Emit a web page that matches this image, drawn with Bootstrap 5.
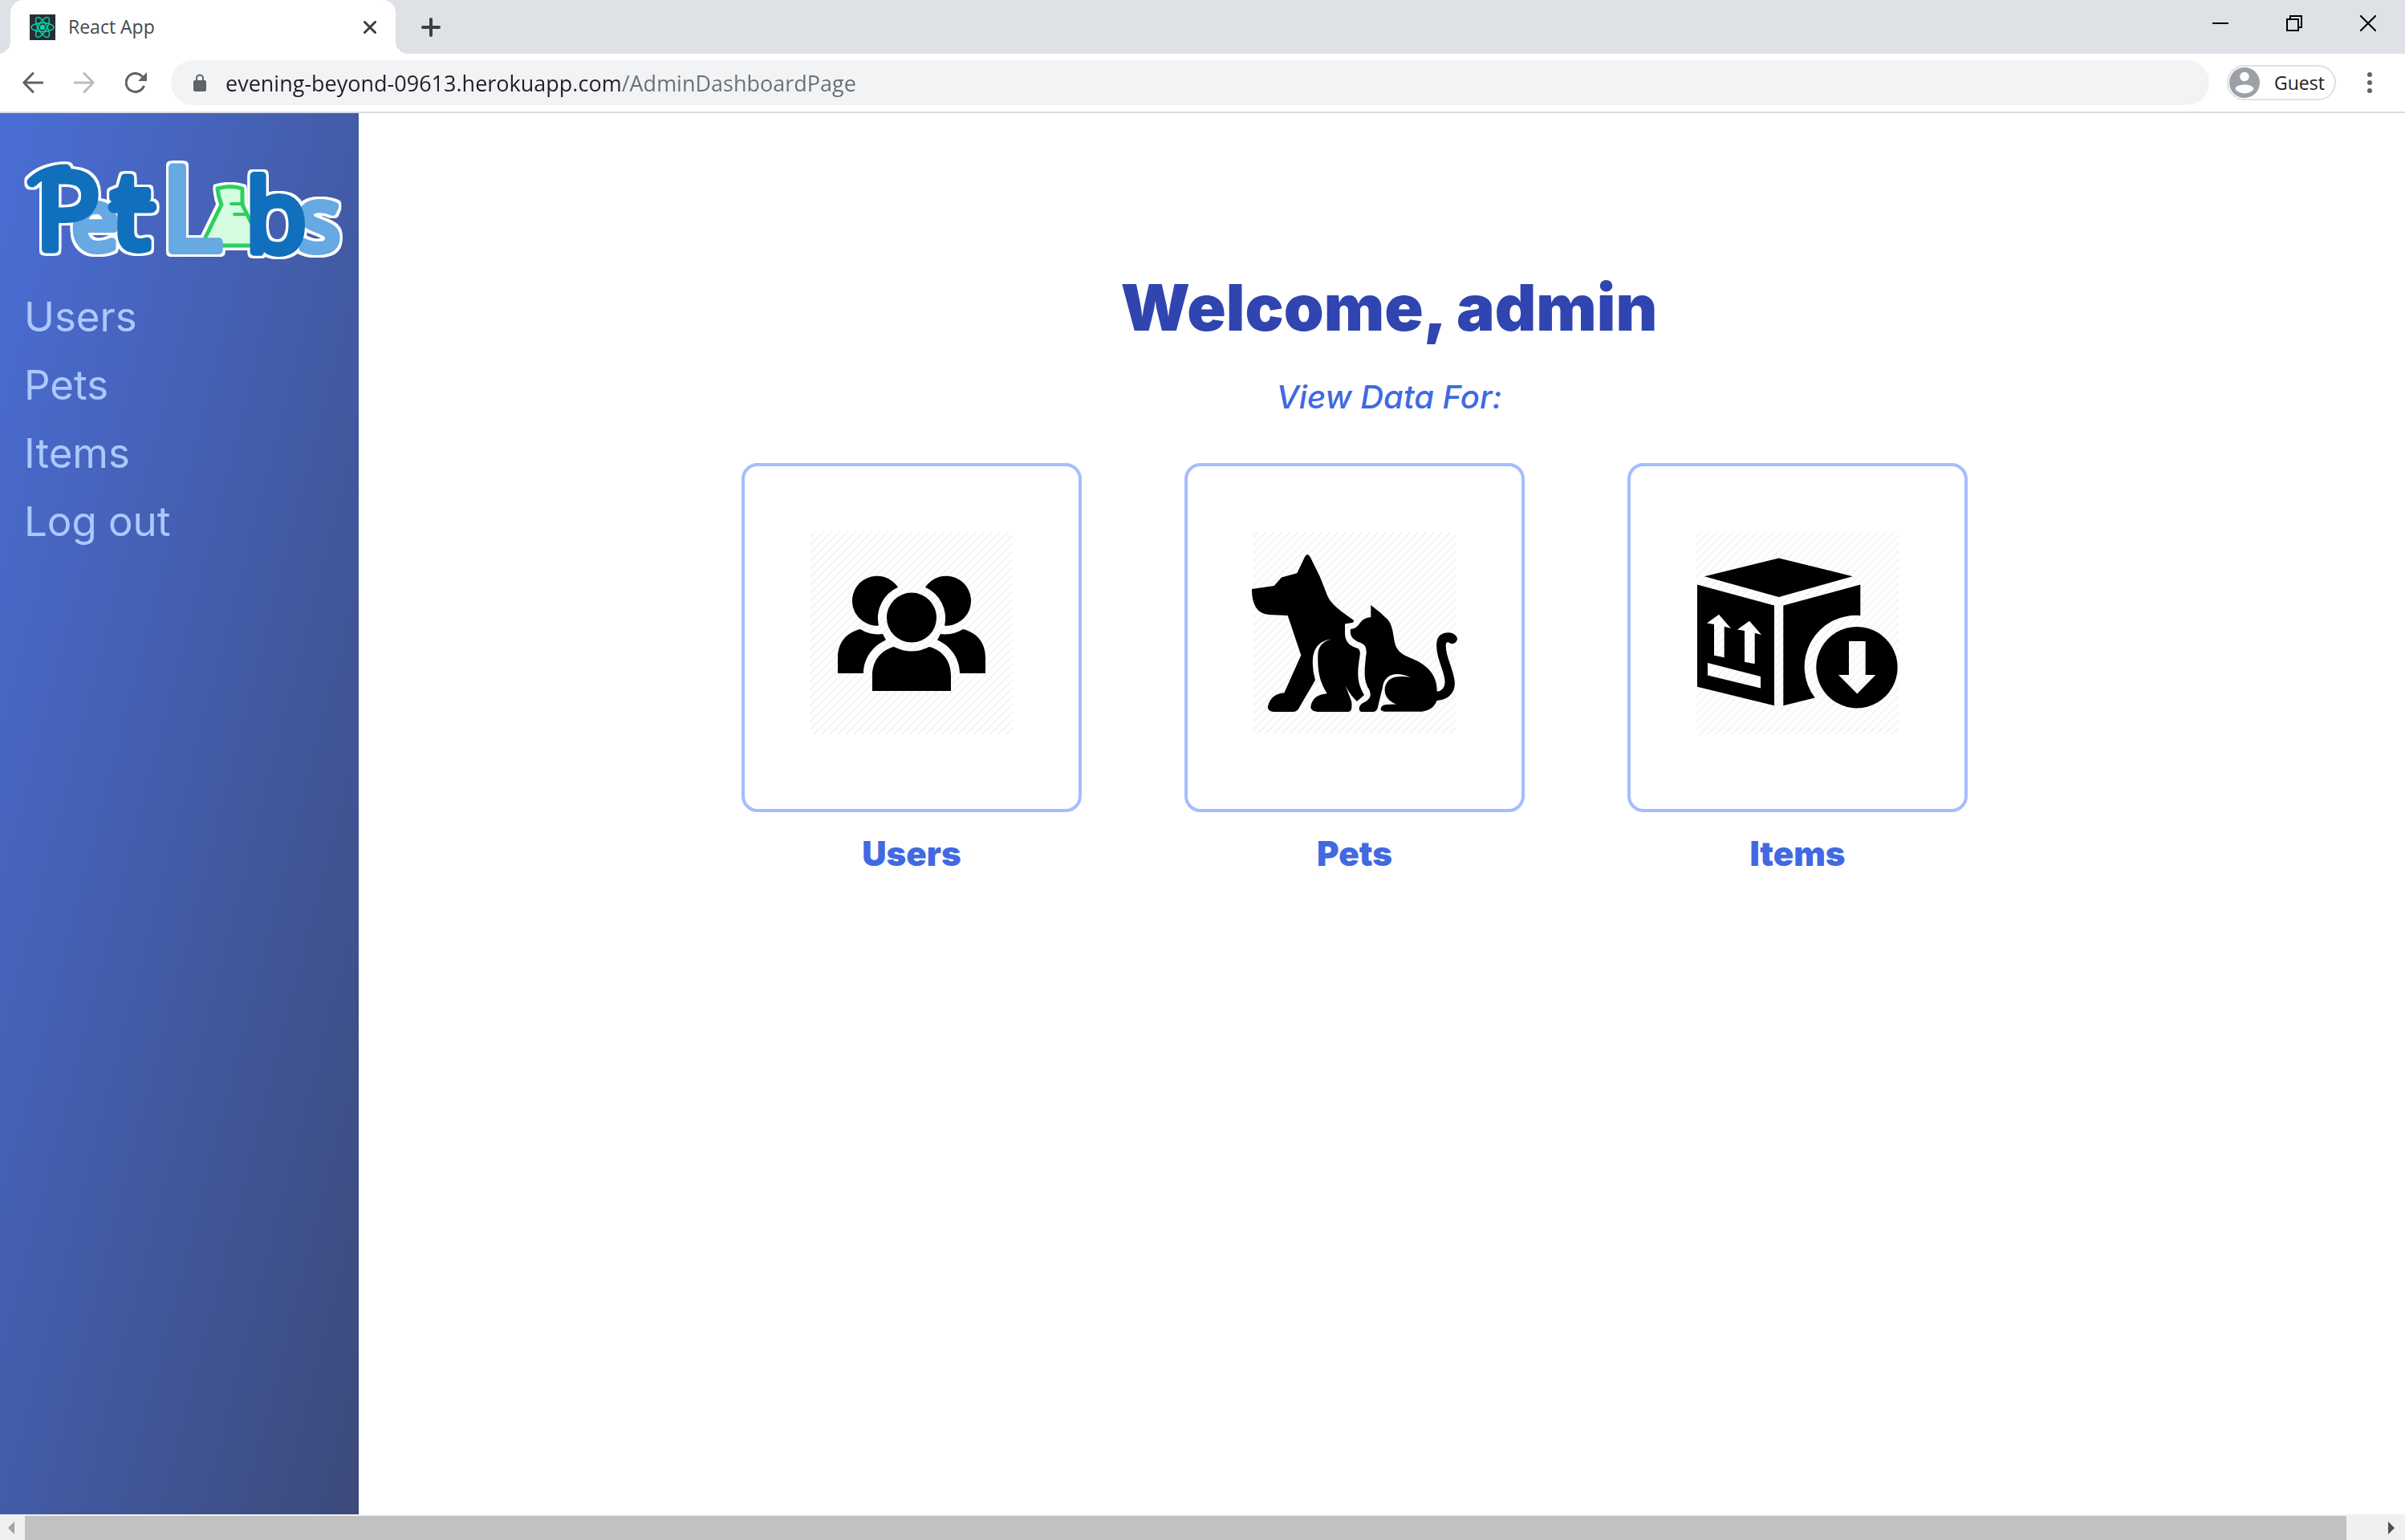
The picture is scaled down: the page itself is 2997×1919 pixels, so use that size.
<!DOCTYPE html>
<html lang="en">
<head>
<meta charset="utf-8">
<meta name="viewport" content="width=device-width, initial-scale=1">
<title>React App</title>
<link href="https://cdn.jsdelivr.net/npm/bootstrap@5.3.0/dist/css/bootstrap.min.css" rel="stylesheet">
<style>
  body { font-family: "Open Sans", "Noto Sans", sans-serif; background: #fff; }
  svg { display: block; flex: none; }
  a { text-decoration: none; }
  .plain { border: 0; background: none; padding: 0; color: inherit; }

  /* browser chrome */
  .tab-strip { background: #dee1e6; height: 67px; padding-left: 13px; padding-right: 36px; }
  .tab-item { width: 480px; height: 67px; background: #fff; border-radius: 16px 16px 0 0; padding: 0 24px; position: relative; }
  .tab-item::before, .tab-item::after { content: ""; position: absolute; bottom: 0; width: 16px; height: 16px; }
  .tab-item::before { left: -16px; background: radial-gradient(circle at 0 0, transparent 16px, #fff 16px); }
  .tab-item::after { right: -16px; background: radial-gradient(circle at 100% 0, transparent 16px, #fff 16px); }
  .tab-title, .guest-name { font-size: 23px; line-height: 32px; color: #45494d; }
  .tab-title { margin-left: 16px; padding-bottom: 2px; }
  .new-tab { margin-left: 32px; }
  .win-buttons { gap: 72px; height: 57px; color: #000; }
  .tool-bar { height: 74px; padding: 0 38px 1px 28px; border-bottom: 2px solid #dadce0; color: #5f6368; }
  .nav-icons { gap: 38px; margin-right: 30px; }
  .address { height: 56px; border-radius: 28px; background: #f1f3f4; padding: 0 28px; gap: 24px; }
  .address input { border: 0; outline: 0; padding: 2px 0 0; height: 42px; font-size: 27px; color: transparent;
    background: linear-gradient(90deg, #202124 493px, #6b6f73 493px); -webkit-background-clip: text; background-clip: text; }
  .guest { width: 136px; height: 44px; border: 2px solid #e0e1e3; border-radius: 22px; padding: 0 1px; gap: 18px; margin-left: 22px; margin-right: 36px; }
  .guest-name { color: #202124; }

  /* dashboard */
  .side-menu { width: 447px; padding: 58px 22px 0 30px; background: linear-gradient(to bottom right, #4a6ed6, #3c4a7a); }
  .side-menu a { font-family: Inter, sans-serif; font-weight: 400; font-size: 51px; line-height: 61px; color: #adc8ff; }
  .side-links { gap: 24px; margin-top: 39px; }
  .logo-art { filter: drop-shadow(3px 0 0 #fff) drop-shadow(-3px 0 0 #fff) drop-shadow(0 3px 0 #fff) drop-shadow(0 -3px 0 #fff); }
  .logo-art text { font-family: "Open Sans", sans-serif; font-weight: 400; stroke-width: 10; stroke-linejoin: round; }
  .ink-dark { fill: #1070bd; stroke: #1070bd; }
  .ink-light { fill: #66a9e3; stroke: #66a9e3; }
  .dash { padding: 192px 0 0 18px; }
  .welcome { font-family: Inter, sans-serif; font-weight: 900; font-size: 80px; line-height: 100px; color: #3045b0; margin: 0; }
  .prompt { font-family: Inter, sans-serif; font-style: italic; font-weight: 500; font-size: 40px; line-height: 48px; color: #4169e1; margin: 38px 0 58px; }
  .tiles { gap: 128px; padding-right: 86px; }
  .tile { width: 424px; }
  .tile-box { height: 435px; border: 4px solid #a5bdff; border-radius: 20px; padding-top: 80px; }
  .tile-label { font-family: Inter, sans-serif; font-weight: 900; font-size: 42px; line-height: 52px; color: #4169e1; margin-top: 26px; }

  /* horizontal scroll bar */
  .scroll-track { height: 32px; background: #f0f0f0; padding: 2px 13px 0 10px; }
  .scroll-thumb { height: 30px; background: #c1c1c1; margin: 0 52px 0 13px; }
</style>
<script src="https://cdn.jsdelivr.net/npm/bootstrap@5.3.0/dist/js/bootstrap.bundle.min.js"></script>
</head>
<body class="vh-100 d-flex flex-column overflow-hidden">

<header>
  <div class="tab-strip d-flex align-items-center">
    <div class="tab-item d-flex align-items-center">
      <svg width="32" height="32" viewBox="0 0 32 32"><rect width="32" height="32" fill="#282c34"/><g fill="none" stroke="#00d8a7" stroke-width="1.5"><ellipse cx="16" cy="16" rx="14" ry="5.4"/><ellipse cx="16" cy="16" rx="14" ry="5.4" transform="rotate(60 16 16)"/><ellipse cx="16" cy="16" rx="14" ry="5.4" transform="rotate(120 16 16)"/></g><circle cx="16" cy="16" r="3.2" fill="#00d8a7"/></svg>
      <span class="tab-title">React App</span>
      <button class="plain ms-auto" aria-label="Close tab"><svg width="16" height="16" viewBox="0 0 16 16"><path d="M1.500 1.500 14.500 14.500M14.500 1.500 1.500 14.500" stroke="#3c4043" stroke-width="3" stroke-linecap="round"/></svg></button>
    </div>
    <button class="plain new-tab" aria-label="New tab"><svg width="24" height="24" viewBox="0 0 24 24"><path d="M12 2V22M2 12H22" stroke="#3c4043" stroke-width="4" stroke-linecap="round"/></svg></button>
    <div class="win-buttons d-flex align-items-center align-self-start ms-auto">
      <button class="plain" aria-label="Minimize"><svg width="20" height="20" viewBox="0 0 20 20"><path d="M0 9H20V11H0z"/></svg></button>
      <button class="plain" aria-label="Restore"><svg width="20" height="20" viewBox="0 0 20 20" fill="none" stroke="#000" stroke-width="2"><path d="M1 5H15V19H1zM5 5V1H19V15H15"/></svg></button>
      <button class="plain" aria-label="Close"><svg width="20" height="20" viewBox="0 0 20 20"><path d="M0 0 20 20M20 0 0 20" stroke="#000" stroke-width="2"/></svg></button>
    </div>
  </div>

  <div class="tool-bar d-flex align-items-center">
    <div class="nav-icons d-flex">
      <button class="plain" aria-label="Back"><svg width="26" height="26" viewBox="0 0 26 26" fill="none" stroke="#5f6368" stroke-width="3" stroke-linecap="round" stroke-linejoin="round"><path d="M25 13H2M13 1.500 1.800 13 13 24.500"/></svg></button>
      <button class="plain" aria-label="Forward"><svg width="26" height="26" viewBox="0 0 26 26" fill="none" stroke="#babcbe" stroke-width="3" stroke-linecap="round" stroke-linejoin="round"><path d="M1 13H24M13 1.500 24.200 13 13 24.500"/></svg></button>
      <button class="plain" aria-label="Reload"><svg width="27" height="26" viewBox="0 0 27 26"><path d="M23 18A11.500 11.500 0 1 1 21 5" fill="none" stroke="#5f6368" stroke-width="3" stroke-linecap="round"/><path d="M27 0V11H16z" fill="#5f6368"/></svg></button>
    </div>
    <div class="address d-flex align-items-center flex-grow-1">
      <svg width="16" height="22" viewBox="0 0 16 22"><rect y="8" width="16" height="14" rx="2" fill="#5f6368"/><path d="M4 9V5.500a4 4 0 0 1 8 0V9" fill="none" stroke="#5f6368" stroke-width="2"/></svg>
      <input class="flex-grow-1" type="text" aria-label="Address" value="evening-beyond-09613.herokuapp.com/AdminDashboardPage">
    </div>
    <button class="plain guest d-flex align-items-center">
      <svg width="38" height="38" viewBox="0 0 38 38"><circle cx="19" cy="19" r="19" fill="#9aa0a6"/><circle cx="19" cy="11.500" r="5.800" fill="#fff"/><path d="M7.500 27C7.500 19.500 30.500 19.500 30.500 27 26 34 12 34 7.500 27z" fill="#fff"/></svg>
      <span class="guest-name">Guest</span>
    </button>
    <button class="plain" aria-label="Menu"><svg width="12" height="26" viewBox="0 0 12 26" fill="#5f6368"><circle cx="6" cy="3" r="3"/><circle cx="6" cy="13" r="3"/><circle cx="6" cy="23" r="3"/></svg></button>
  </div>
</header>

<div class="d-flex flex-grow-1 overflow-hidden">
  <nav class="side-menu flex-shrink-0">
    <a href="#home" class="d-block" aria-label="Pet Labs">
      <svg class="logo-art overflow-visible" width="395" height="126" viewBox="0 0 395 126">
        <text class="ink-light" x="60" y="112" font-size="102">e</text>
        <text class="ink-dark" x="14" y="112" font-size="134">P</text>
        <path class="ink-dark" d="M10 28C20 18 36 12 52 12" fill="none" stroke-width="13" stroke-linecap="round"/>
        <text class="ink-dark" x="109" y="111" font-size="134">t</text>
        <path class="ink-dark" d="M112 59H158" stroke-width="15" stroke-linecap="round"/>
        <path d="M241 36Q257 31 272 36V56L297 107H221L246 56Q242 46 241 36z" fill="#d5fde0" stroke="#2bd05d" stroke-width="5" stroke-linejoin="round"/>
        <path d="M258 55H273M262 68H277" stroke="#2bd05d" stroke-width="4" stroke-linecap="round"/>
        <text class="ink-light" x="171" y="113" font-size="144">L</text>
        <text class="ink-light" x="342" y="113" font-size="108">s</text>
        <text class="ink-dark" x="276" y="115" font-size="124">b</text>
      </svg>
    </a>
    <div class="side-links d-flex flex-column">
      <a href="#users">Users</a>
      <a href="#pets">Pets</a>
      <a href="#items">Items</a>
      <a href="#logout">Log out</a>
    </div>
  </nav>

  <main class="dash flex-grow-1 text-center">
    <h1 class="welcome">Welcome, admin</h1>
    <p class="prompt">View Data For:</p>
    <div class="tiles d-flex justify-content-center">
      <a class="tile" href="#users">
        <div class="tile-box d-flex justify-content-center">
          <svg width="256" height="256" viewBox="0 0 256 256">
            <defs><pattern id="hatch" width="10" height="10" patternUnits="userSpaceOnUse"><path d="M-1 11 11 -1M-1 1 1 -1M9 11 11 9" stroke="#f4f4f4" stroke-width="2"/></pattern></defs>
            <rect x="2" y="2" width="252" height="252" fill="url(#hatch)"/>
            <circle cx="128" cy="108.600" r="31"/>
            <path d="M79 200V181C79 162 90 149 106 145Q128 156 150 145C166 149 177 162 177 181V200z"/>
            <g id="side-person"><path d="M111 70.800A31 31 0 1 0 87 118.600A42 42 0 0 1 111 70.800z"/><path d="M36 178V158C36 140 47 127 64 123A42 42 0 0 0 92 129L96 136.500C79 144 68 160 68 178z"/></g>
            <use href="#side-person" transform="translate(256) scale(-1 1)"/>
          </svg>
        </div>
        <div class="tile-label">Users</div>
      </a>
      <a class="tile" href="#pets">
        <div class="tile-box d-flex justify-content-center">
          <svg width="256" height="256" viewBox="0 0 256 256">
            <rect x="2" y="2" width="252" height="252" fill="url(#hatch)"/>
            <path d="M0 73 27.700 69 37 58.600 56.300 53.300 66 33Q69 27 72.700 33L85 58 94 81C99 93 112 101 127.300 112.200L126 114.700 116 116.500V129C117 143 127 145 132 147Q136 149 134.300 158C131 178 131 190 140 205L131 213Q123 206 116.700 193.600L124 212.600Q126 226 120 226H81.700Q73 225 73.300 220C75 208 84 204 93.700 203.300C86 190 82 180 82.300 157C82 146 87 138 99.300 135.400C84 137 77 147 76 160Q75 173 79 186.500L60 219Q57 226 51.700 226H26.700Q19 225 20 219C23 208 30 203 40.300 202.600L61.300 155.400 44.700 106 22 105Q0 104 0 73z"/>
            <path d="M148.300 93V108Q139 109 135 115 131 122 123 123C121 136 132 138 137 140.800Q143 143 142.700 152C140 175 139 187 146 198Q150 206 145 210.500C141 215 134 215 133.700 222Q134 226 137 226H152Q156 225 157 220L163 195C165 181 177 174 197.700 183C178 180 169 184 166 195 164 205 170 213 180 216.500L167 217Q160 218 160.700 224L165 225.800H212Q226 224 230.700 212C247 211 254 200 252.700 188 251 172 240 154 242 141Q243 138 247 140.500C252 143 256 138 256 134.700 254 125 235 124 231 136 226 156 244 180 240 193Q238 200 230.700 200.800C231 182 221 171 207 163 196 157 180 156 177.300 136 174 110 169 112 162 104z"/>
          </svg>
        </div>
        <div class="tile-label">Pets</div>
      </a>
      <a class="tile" href="#items">
        <div class="tile-box d-flex justify-content-center">
          <svg width="256" height="256" viewBox="0 0 256 256" fill-rule="evenodd">
            <rect x="2" y="2" width="252" height="252" fill="url(#hatch)"/>
            <path d="M12 57.200 104.700 34.400 196.700 57.200 104.700 83z"/>
            <path d="M3 67.600 99 93.600V218.300L3 194.700zM30 104.700 15 115.400 24 116.900V155.800L36.700 158.300V119.700L45 121.900zM68 112.700 53 123.400 62 124.900V163.800L74.700 166.300V127.700L83 129.900zM16 165V180.400L82 196.500V181.900z"/>
            <path d="M110.300 93.600 206.300 67.600V106.100A64 64 0 0 0 149.700 208.600L110.300 218.300z"/>
            <path d="M202 120A50.700 50.700 0 1 1 201.900 120zM192 138V180H179L202.300 203.600 225.300 180H212.700V138z"/>
          </svg>
        </div>
        <div class="tile-label">Items</div>
      </a>
    </div>
  </main>
</div>

<div class="scroll-track d-flex align-items-center">
  <svg width="8" height="16" viewBox="0 0 8 16"><path d="M8 0V16L0 8z" fill="#a3a3a3"/></svg>
  <div class="scroll-thumb flex-grow-1"></div>
  <svg width="8" height="16" viewBox="0 0 8 16"><path d="M0 0V16L8 8z" fill="#505050"/></svg>
</div>

</body>
</html>
